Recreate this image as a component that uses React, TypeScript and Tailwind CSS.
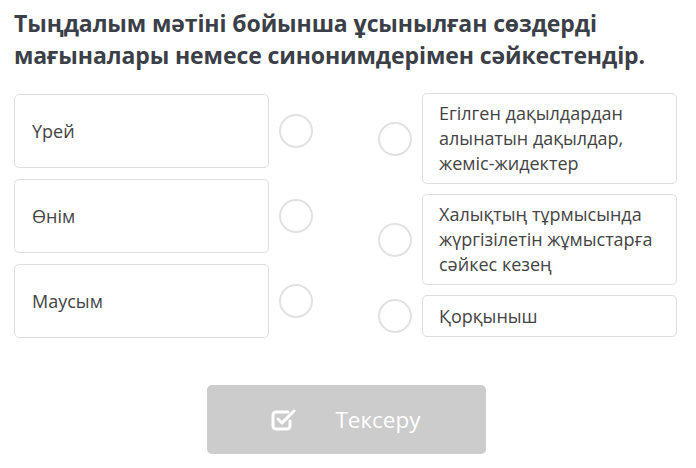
import React from 'react';

const left = ['Үрей', 'Өнім', 'Маусым'];
const right = [
  'Егілген дақылдардан алынатын дақылдар, жеміс-жидектер',
  'Халықтың тұрмысында жүргізілетін жұмыстарға сәйкес кезең',
  'Қорқыныш',
];

function Circle() {
  return <div className="w-[34px] h-[34px] rounded-full border-2 border-[#e2e2e2] bg-white shrink-0" />;
}

export default function App() {
  return (
    <div className="w-[696px] h-[468px] bg-white overflow-hidden" style={{ fontFamily: '"Open Sans", sans-serif' }}>
      <h1 className="px-[14px] pt-[7px] text-[23px] leading-[32px] font-bold text-[#3b3f47] tracking-[-0.1px]">
        Тыңдалым мәтіні бойынша ұсынылған сөздерді<br />
        мағыналары немесе синонимдерімен сәйкестендір.
      </h1>

      <div className="flex justify-between px-[14px] pt-[23px] pr-[19px]">
        <div className="flex flex-col gap-[11px]">
          {left.map((t) => (
            <div key={t} className="flex items-center gap-[10px]">
              <div className="w-[255px] h-[74px] border border-[#dedede] rounded-[5px] flex items-center pl-[17px] text-[18px] text-[#444]">
                {t}
              </div>
              <Circle />
            </div>
          ))}
        </div>

        <div className="flex flex-col gap-[10px] -mt-[1px]">
          {right.map((t, i) => (
            <div key={t} className="flex items-center gap-[10px]">
              <Circle />
              <div
                className={
                  'w-[255px] border border-[#dedede] rounded-[5px] flex items-center pl-[16px] pr-[8px] text-[18px] leading-[25px] text-[#444] ' +
                  (i === 2 ? 'h-[42px]' : 'h-[91px]')
                }
              >
                {t}
              </div>
            </div>
          ))}
        </div>
      </div>

      <div className="flex justify-center pt-[47px] pr-[4px]">
        <button className="w-[279px] h-[69px] bg-[#cccccc] rounded-[5px] flex items-center justify-center gap-[38px] text-white text-[22.5px]">
          <svg width="26" height="22" viewBox="0 0 26 22" fill="none" stroke="white" strokeWidth="3" strokeLinecap="round" strokeLinejoin="round">
            <path d="M17 3H5a3 3 0 0 0-3 3v11a3 3 0 0 0 3 3h11a3 3 0 0 0 3-3v-5" />
            <path d="M7 10l4 4 12-12" />
          </svg>
          <span>Тексеру</span>
        </button>
      </div>
    </div>
  );
}
